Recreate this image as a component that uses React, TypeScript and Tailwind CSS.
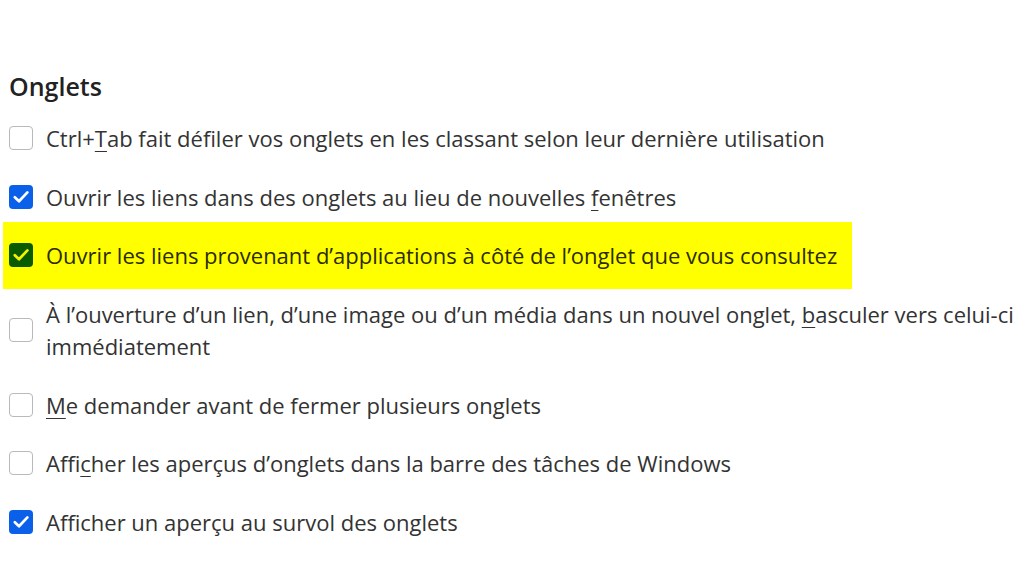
import React from "react";

const font = { fontFamily: '"Open Sans", "Noto Sans", sans-serif' };

function Box({ checked, hl }: { checked: boolean; hl?: boolean }) {
  if (checked) {
    return (
      <div
        className={`w-[24px] h-[24px] shrink-0 rounded-[4px] ${hl ? "bg-[#0a5a00]" : "bg-[#0b60ea]"}`}
      >
        <svg width="24" height="24" viewBox="0 0 24 24" fill="none">
          <path
            d="M5.8 12.2 L10 16.2 L18.4 7.4"
            stroke={hl ? "#f4f400" : "#ffffff"}
            strokeWidth="2.7"
            strokeLinecap="round"
            strokeLinejoin="round"
          />
        </svg>
      </div>
    );
  }
  return <div className="w-[24px] h-[24px] shrink-0 rounded-[4px] border border-[#b9b9bd] bg-white" />;
}

function U({ children }: { children: React.ReactNode }) {
  return <span className="underline decoration-[1px] underline-offset-[4px]">{children}</span>;
}

function Row({
  checked,
  children,
  hl,
}: {
  checked: boolean;
  children: React.ReactNode;
  hl?: boolean;
}) {
  return (
    <div className="flex items-center gap-[13px] pl-[9px] py-[13.3px]">
      <Box checked={checked} hl={hl} />
      <div className={`text-[22px] leading-[32px] whitespace-nowrap ${hl ? "text-[#2c2c00]" : "text-[#333333]"}`}>
        {children}
      </div>
    </div>
  );
}

export default function App() {
  return (
    <div className="w-[1024px] h-[576px] bg-white overflow-hidden pt-[70px]" style={font}>
      <h2 className="pl-[9px] text-[25px] font-semibold leading-[32px] text-[#222222] mb-[7px]">Onglets</h2>
      <div className="flex flex-col">
        <Row checked={false}>
          Ctrl+<U>T</U>ab fait défiler vos onglets en les classant selon leur dernière utilisation
        </Row>
        <Row checked>
          Ouvrir les liens dans des onglets au lieu de nouvelles <U>f</U>enêtres
        </Row>
        <div className="ml-[3px] w-[849px] bg-[#ffff00] my-[-4px] py-[4px]">
          <div className="-ml-[3px]">
            <Row checked hl>
              Ouvrir les liens provenant d’applications à côté de l’onglet que vous consultez
            </Row>
          </div>
        </div>
        <Row checked={false}>
          À l’ouverture d’un lien, d’une image ou d’un média dans un nouvel onglet, <U>b</U>asculer vers celui-ci
          <br />
          immédiatement
        </Row>
        <Row checked={false}>
          <U>M</U>e demander avant de fermer plusieurs onglets
        </Row>
        <Row checked={false}>
          Affi<U>c</U>her les aperçus d’onglets dans la barre des tâches de Windows
        </Row>
        <Row checked>
          Afficher un aperçu au survol des onglets
        </Row>
      </div>
    </div>
  );
}
